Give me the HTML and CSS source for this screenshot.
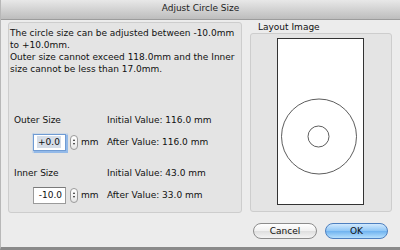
FILE: index.html
```html
<!DOCTYPE html>
<html lang="en">

<head>
    <meta charset="UTF-8">
    <meta name="viewport" content="width=device-width, initial-scale=1.0">
    <title>Adjust Circle Size</title>
    <link rel="stylesheet" href="styles.css">
</head>

<body>

    <div class="window">
        <div class="titlebar">Adjust Circle Size</div>

        <div class="content">
            <div class="settings">
                <p class="note">The circle size can be adjusted between -10.0mm to +10.0mm.<br>
                    Outer size cannot exceed 118.0mm and the Inner size cannot be less than 17.0mm.</p>

                <div class="size-group outer">
                    <span class="size-label">Outer Size</span>
                    <span>Initial Value: 116.0 mm</span>
                    <div class="input-cell">
                        <span class="field focused"><span class="selected">+0.0</span></span>
                        <span class="stepper"><i class="up"></i><i class="down"></i></span>
                        <span class="unit">mm</span>
                    </div>
                    <span>After Value: 116.0 mm</span>
                </div>

                <div class="size-group inner">
                    <span class="size-label">Inner Size</span>
                    <span>Initial Value: 43.0 mm</span>
                    <div class="input-cell">
                        <span class="field">-10.0</span>
                        <span class="stepper"><i class="up"></i><i class="down"></i></span>
                        <span class="unit">mm</span>
                    </div>
                    <span>After Value: 33.0 mm</span>
                </div>
            </div>

            <div class="layout">
                <div class="layout-title">Layout Image</div>
                <div class="layout-box">
                    <svg class="preview" width="87" height="167" viewBox="0 0 87 167">
                        <rect x="0.5" y="0.5" width="86" height="166" fill="#fff" stroke="#333" />
                        <circle cx="42" cy="98.5" r="37.5" fill="none" stroke="#333" stroke-width="0.8" />
                        <circle cx="41.5" cy="98.5" r="10.5" fill="none" stroke="#333" stroke-width="0.8" />
                    </svg>
                </div>
            </div>
        </div>

        <div class="buttons">
            <button class="btn">Cancel</button>
            <button class="btn primary">OK</button>
        </div>
    </div>

</body>

</html>
```

FILE: styles.css
```css
body {
    margin: 0;
    padding: 0;
    font-family: 'DejaVu Sans', sans-serif;
    font-size: 9px;
    color: #111;
}

.window {
    width: 400px;
    height: 250px;
    box-sizing: border-box;
    background-color: #ececec;
    border-left: 1px solid #b8b8b8;
    border-bottom: 3px solid #8a8a8a;
}

.titlebar {
    height: 19px;
    line-height: 16px;
    text-align: center;
    color: #222;
    background: linear-gradient(#e8e8e8, #bdbdbd);
    border-bottom: 1px solid #9c9c9c;
}

.content {
    display: flex;
    gap: 8px;
    padding: 2px 8px 0 7px;
}

.settings {
    width: 234px;
    height: 191px;
    box-sizing: border-box;
    background-color: #e4e4e4;
    border: 1px solid #cdcdcd;
    border-radius: 3px;
    padding: 4px 1px 0 1px;
}

.note {
    margin: 0;
    line-height: 12px;
}

.size-group {
    display: grid;
    grid-template-columns: 93px 1fr;
    grid-template-rows: 14px 18px;
    row-gap: 6px;
    align-items: center;
    margin-left: 4px;
}

.size-group.outer {
    margin-top: 38px;
}

.size-group.inner {
    margin-top: 15px;
}

.input-cell {
    display: flex;
    align-items: center;
    padding-left: 19px;
}

.field {
    width: 33px;
    height: 17px;
    box-sizing: border-box;
    background-color: #fff;
    border: 1px solid #9a9a9a;
    border-top-color: #7a7a7a;
    text-align: right;
    padding-right: 3px;
    line-height: 15px;
}

.field.focused {
    border-color: #6f9bd3;
    box-shadow: 0 0 1px 1.5px #93b9e8;
    text-align: left;
    padding-left: 3px;
}

.selected {
    background-color: #d5dde8;
    padding: 1px 1px;
}

.stepper {
    width: 8px;
    height: 15px;
    box-sizing: border-box;
    margin-left: 4px;
    border: 1px solid #9a9a9a;
    border-radius: 4px;
    background: linear-gradient(#ffffff, #e6e6e6);
    display: flex;
    flex-direction: column;
    align-items: center;
    justify-content: center;
    gap: 2px;
}

.stepper i {
    width: 0;
    height: 0;
    border-left: 1.5px solid transparent;
    border-right: 1.5px solid transparent;
}

.stepper .up {
    border-bottom: 2.5px solid #222;
}

.stepper .down {
    border-top: 2.5px solid #222;
}

.unit {
    margin-left: 3px;
}

.layout {
    width: 142px;
}

.layout-title {
    height: 11px;
    line-height: 11px;
    padding-left: 8px;
}

.layout-box {
    height: 179px;
    box-sizing: border-box;
    background-color: #e4e4e4;
    border: 1px solid #cdcdcd;
    border-radius: 3px;
    padding: 4px 0 0 26px;
}

.preview {
    display: block;
}

.buttons {
    display: flex;
    justify-content: flex-end;
    gap: 8px;
    padding: 10px 12px 0 0;
}

.btn {
    width: 64px;
    height: 16px;
    padding: 0;
    font-family: 'DejaVu Sans', sans-serif;
    font-size: 9px;
    color: #111;
    border: 1px solid #8c8c8c;
    border-radius: 8px;
    background: linear-gradient(#ffffff 0%, #f0f0f0 50%, #dedede 51%, #f4f4f4 100%);
}

.btn.primary {
    width: 63px;
    border-color: #4d7fbf;
    background: linear-gradient(#d2e9fd 0%, #8ec6f6 50%, #6eb2ef 51%, #b6e0fd 100%);
}
```
